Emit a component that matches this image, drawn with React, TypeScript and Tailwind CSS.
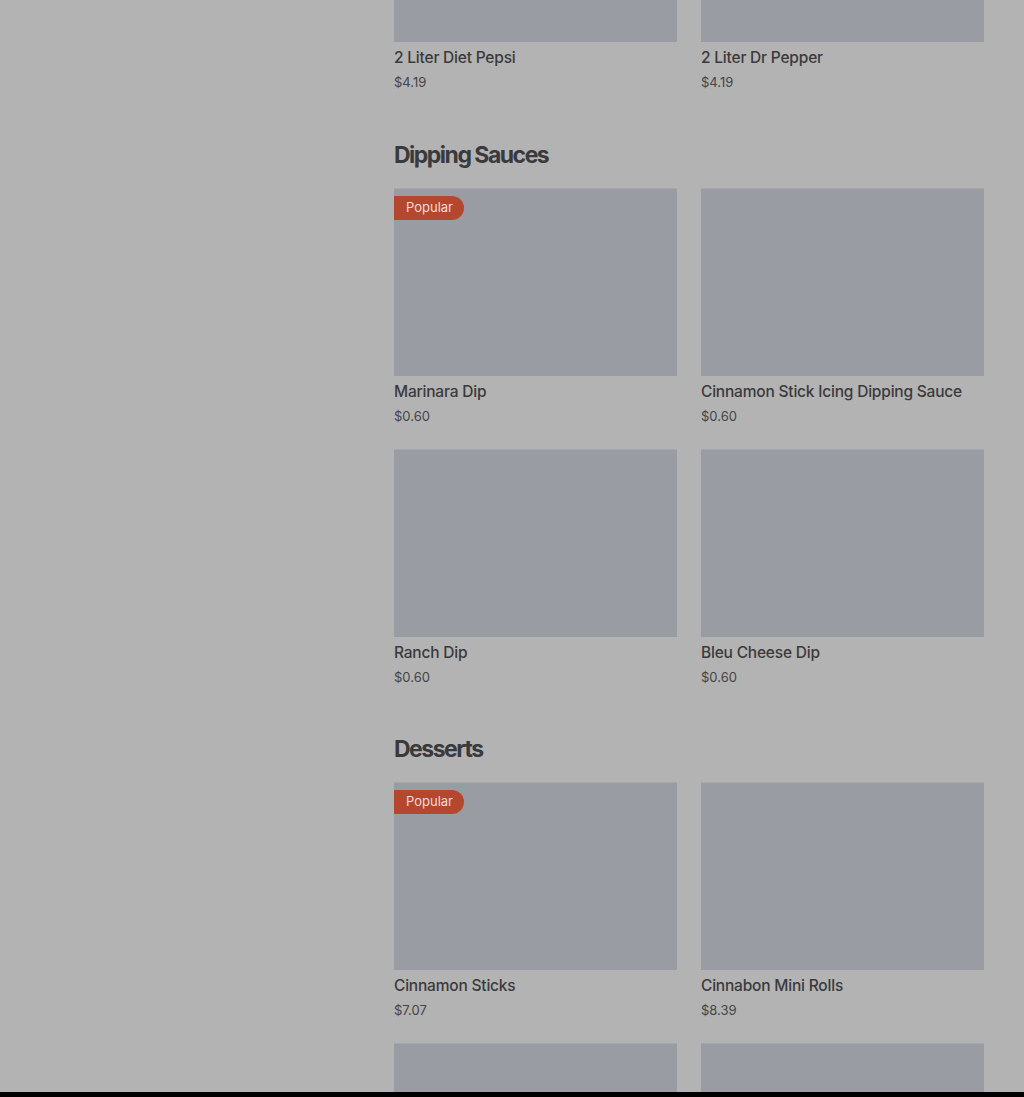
type Item = { name: string; price: string; popular?: boolean };

const sections: { title?: string; items: Item[] }[] = [
  {
    items: [
      { name: "2 Liter Diet Pepsi", price: "$4.19" },
      { name: "2 Liter Dr Pepper", price: "$4.19" },
    ],
  },
  {
    title: "Dipping Sauces",
    items: [
      { name: "Marinara Dip", price: "$0.60", popular: true },
      { name: "Cinnamon Stick Icing Dipping Sauce", price: "$0.60" },
      { name: "Ranch Dip", price: "$0.60" },
      { name: "Bleu Cheese Dip", price: "$0.60" },
    ],
  },
  {
    title: "Desserts",
    items: [
      { name: "Cinnamon Sticks", price: "$7.07", popular: true },
      { name: "Cinnabon Mini Rolls", price: "$8.39" },
      { name: "", price: "" },
      { name: "", price: "" },
    ],
  },
];

function Card({ item }: { item: Item }) {
  return (
    <div className="flex flex-col">
      <div className="relative h-[188px] bg-[#999ca3] border-t border-[#a3a7ae]">
        {item.popular && (
          <span className="absolute left-0 top-[7px] h-[24px] w-[70px] flex items-center pl-[12px] rounded-r-full bg-[#b4482f] text-[13px] text-[#f0dcd6]">
            Popular
          </span>
        )}
      </div>
      {item.name && (
        <>
          <div className="mt-[6px] text-[15.5px] leading-[20px] font-medium text-[#3a3a3c] tracking-[-0.2px]">
            {item.name}
          </div>
          <div className="mt-[5px] text-[13px] leading-[18px] text-[#454547]">{item.price}</div>
        </>
      )}
    </div>
  );
}

export default function App() {
  return (
    <div className="h-[1097px] flex flex-col overflow-hidden bg-[#b3b3b3] font-['Inter','Liberation_Sans',sans-serif]">
      <div className="h-[1092px] overflow-hidden flex">
        <div className="w-[394px] shrink-0" />
        <div className="w-[590px] -mt-[146px] flex flex-col">
          {sections.map((s, i) => (
            <section key={i} className={i === 1 ? "mt-[48px]" : i > 1 ? "mt-[47px]" : ""}>
              {s.title && (
                <h2 className="text-[23px] leading-[32px] font-bold tracking-[-1.5px] text-[#3a3a3c] mb-[17px]">
                  {s.title}
                </h2>
              )}
              <div className="grid grid-cols-2 gap-x-[24px] gap-y-[24px]">
                {s.items.map((it, j) => (
                  <Card key={j} item={it} />
                ))}
              </div>
            </section>
          ))}
        </div>
      </div>
      <div className="h-[5px] bg-black" />
    </div>
  );
}
